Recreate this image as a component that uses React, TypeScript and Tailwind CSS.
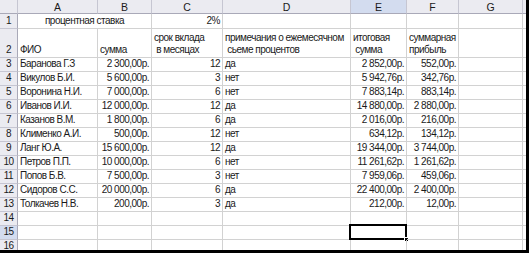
import React from "react";

type Align = "l" | "r" | "c";
type C = { t?: string; a?: Align; span?: number; wrap?: [string, string] };

const data: [string, string, string, string, string, string][] = [
  ["Баранова Г.З", "2 300,00р.", "12", "да", "2 852,00р.", "552,00р."],
  ["Викулов Б.И.", "5 600,00р.", "3", "нет", "5 942,76р.", "342,76р."],
  ["Воронина Н.И.", "7 000,00р.", "6", "нет", "7 883,14р.", "883,14р."],
  ["Иванов И.И.", "12 000,00р.", "12", "да", "14 880,00р.", "2 880,00р."],
  ["Казанов В.М.", "1 800,00р.", "6", "да", "2 016,00р.", "216,00р."],
  ["Клименко А.И.", "500,00р.", "12", "нет", "634,12р.", "134,12р."],
  ["Ланг Ю.А.", "15 600,00р.", "12", "да", "19 344,00р.", "3 744,00р."],
  ["Петров П.П.", "10 000,00р.", "6", "нет", "11 261,62р.", "1 261,62р."],
  ["Попов Б.В.", "7 500,00р.", "3", "нет", "7 959,06р.", "459,06р."],
  ["Сидоров С.С.", "20 000,00р.", "6", "да", "22 400,00р.", "2 400,00р."],
  ["Толкачев Н.В.", "200,00р.", "3", "да", "212,00р.", "12,00р."],
];

const nb = (s: string) => s.replace(/ /g, "\u00a0");

function HeadCell({ t, sel }: { t: string; sel?: boolean }) {
  return (
    <div
      className={
        "flex items-center justify-center text-[10.5px] tracking-normal border-r border-b border-r-[#c6c6d2] border-b-[#a9a9b8] " +
        (sel ? "bg-[#d3dcef]" : "bg-[#ebebf1]")
      }
    >
      {t}
    </div>
  );
}

function RowHead({ t, sel }: { t: string; sel?: boolean }) {
  return (
    <div
      className={
        "flex items-end justify-center pb-[1px] border-r border-b border-r-[#a9a9b8] border-b-[#c6c6d2] " +
        (sel ? "bg-[#d3dcef]" : "bg-[#ebebf1]")
      }
    >
      {t}
    </div>
  );
}

function Cell({ c, sel }: { c: C; sel?: boolean }) {
  const just = c.a === "r" ? "justify-end" : c.a === "c" ? "justify-center" : "justify-start";
  return (
    <div
      className={
        "relative flex items-end pb-[1px] px-[2px] border-r border-b border-[#d2d2d2] whitespace-pre " +
        just +
        (c.span === 2 ? " col-span-2" : "")
      }
    >
      {c.wrap ? (
        <div className="flex flex-col leading-[12px]">
          <span>{c.wrap[0]}</span>
          <span>{c.wrap[1]}</span>
        </div>
      ) : (
        <span>{c.t ? nb(c.t) : ""}</span>
      )}
      {sel && (
        <>
          <div className="absolute left-[-2px] top-[-2px] right-[-1px] bottom-[-1px] border-2 border-black" />
          <div className="absolute right-[-3px] bottom-[-3px] w-[5px] h-[5px] bg-black border border-white" />
        </>
      )}
    </div>
  );
}

export default function App() {
  const rows: { n: string; cells: C[] }[] = [];
  rows.push({
    n: "1",
    cells: [{ t: "процентная ставка", a: "c", span: 2 }, { t: "2%", a: "r" }, {}, {}, {}, {}, {}],
  });
  rows.push({
    n: "2",
    cells: [
      { t: "ФИО" },
      { t: "сумма" },
      { wrap: ["срок вклада", " в месяцах"] },
      { wrap: ["примечания о ежемесячном", " сьеме процентов"] },
      { wrap: ["итоговая", " сумма"] },
      { wrap: ["суммарная", "прибыль"] },
      {},
      {},
    ],
  });
  data.forEach((d, i) => {
    rows.push({
      n: String(i + 3),
      cells: [
        { t: d[0] },
        { t: d[1], a: "r" },
        { t: d[2], a: "r" },
        { t: d[3] },
        { t: d[4], a: "r" },
        { t: d[5], a: "r" },
        {},
        {},
      ],
    });
  });
  ["14", "15", "16"].forEach((n) =>
    rows.push({ n, cells: [{}, {}, {}, {}, {}, {}, {}, {}] })
  );

  return (
    <div className="w-[529px] h-[253px] bg-white overflow-hidden border-r-[3px] border-b-[3px] border-black box-border font-['Liberation_Sans',Arial,sans-serif] text-[10px] tracking-[-0.5px] text-[#1a1a1a] leading-[12px]">
      <div className="grid grid-cols-[18px_80px_54px_71px_128px_56px_52px_64px_3px] grid-rows-[14px_15px_29px_repeat(13,14px)_14px]">
        <div className="bg-[#ebebf1] border-r border-b border-r-[#c6c6d2] border-b-[#a9a9b8]" />
        {["A", "B", "C", "D", "E", "F", "G"].map((h) => (
          <HeadCell key={h} t={h} sel={h === "E"} />
        ))}
        <div className="bg-[#ebebf1] border-b border-b-[#a9a9b8]" />
        {rows.map((r) => (
          <React.Fragment key={r.n}>
            <RowHead t={r.n} sel={r.n === "15"} />
            {r.cells.map((c, j) => (
              <Cell key={j} c={c} sel={r.n === "15" && j === 4} />
            ))}
          </React.Fragment>
        ))}
      </div>
    </div>
  );
}
